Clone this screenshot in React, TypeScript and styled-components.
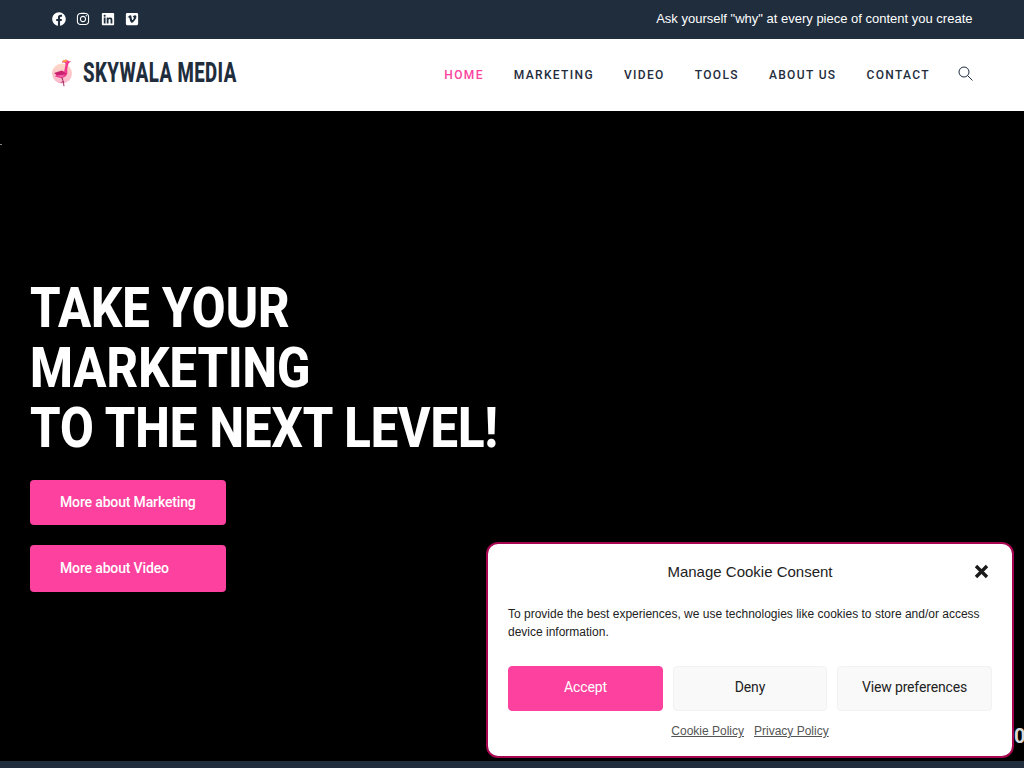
import React from 'react';
import styled, { createGlobalStyle } from 'styled-components';
import { FaFacebook, FaInstagram, FaLinkedin, FaVimeoSquare } from 'react-icons/fa';

const GlobalStyle = createGlobalStyle`
  html, body {
    margin: 0;
    padding: 0;
    height: 100%;
    overflow: hidden;
    background: #000000;
    font-family: "Liberation Sans", Arial, sans-serif;
  }
  * {
    box-sizing: border-box;
  }
`;

const Page = styled.div`
  position: relative;
  width: 1024px;
  height: 768px;
  overflow: hidden;
  display: flex;
  flex-direction: column;
`;

const TopBar = styled.div`
  height: 39px;
  flex: none;
  background: #1f2d3d;
  display: flex;
  align-items: center;
  justify-content: space-between;
  padding: 0 51.5px 2px;
`;

const SocialList = styled.div`
  display: flex;
  align-items: center;
  gap: 10.5px;
  color: #ffffff;
  font-size: 14px;
  svg {
    display: block;
    width: 14px;
    height: 14px;
  }
`;

const TopText = styled.div`
  color: #ffffff;
  font-size: 13px;
  line-height: 18px;
`;

const Header = styled.header`
  height: 72px;
  flex: none;
  background: #ffffff;
  display: flex;
  align-items: center;
  justify-content: space-between;
  padding: 0 51px;
`;

const Logo = styled.div`
  display: flex;
  align-items: center;
  gap: 10px;
`;

const FlamingoMark = styled.svg`
  display: block;
  flex: none;
  margin-top: -5px;
`;

const LogoText = styled.span`
  display: block;
  margin-top: -4px;
  font-family: "Roboto", sans-serif;
  font-weight: 800;
  font-size: 27px;
  line-height: 30px;
  letter-spacing: 0.6px;
  color: #1f2d3d;
  white-space: nowrap;
  transform: scaleX(0.69);
  transform-origin: left center;
`;

const Nav = styled.nav`
  display: flex;
  align-items: center;
  gap: 30px;
`;

const NavLink = styled.a<{ $active?: boolean }>`
  font-family: "Roboto", sans-serif;
  font-weight: 500;
  font-size: 12px;
  line-height: 16px;
  letter-spacing: 1.35px;
  margin-top: -1px;
  color: ${(p) => (p.$active ? '#fc429e' : '#1f2d3d')};
  white-space: nowrap;
`;

const SearchButton = styled.span`
  display: block;
  width: 15px;
  height: 15px;
  margin: -3px 0 0 -2px;
  color: #1f2d3d;
  svg {
    display: block;
  }
`;

const Hero = styled.section`
  position: relative;
  flex: 1;
  background: #000000;
  padding: 167px 0 0 30px;
`;

const Speck = styled.span`
  position: absolute;
  left: 0;
  top: 33px;
  width: 2px;
  height: 1px;
  background: #8a8a8a;
`;

const Counter = styled.span`
  position: absolute;
  left: 1014px;
  top: 613px;
  font-family: "Roboto", sans-serif;
  font-weight: 700;
  font-size: 20px;
  line-height: 24px;
  color: #d8d8d8;
`;

const Title = styled.h1`
  margin: 0 0 22px;
  font-family: "Roboto", sans-serif;
  font-weight: 800;
  font-size: 56px;
  line-height: 60px;
  color: #ffffff;
  white-space: nowrap;
  transform: scaleX(0.875);
  transform-origin: left center;
`;

const HeroButton = styled.a<{ $tall?: boolean }>`
  display: flex;
  align-items: center;
  width: 196px;
  height: ${(p) => (p.$tall ? '47px' : '45px')};
  margin-bottom: 20px;
  padding: 0 0 2px 30px;
  border-radius: 4px;
  background: #fc429e;
  color: #ffffff;
  font-family: "Roboto", sans-serif;
  font-weight: 500;
  font-size: 14px;
  letter-spacing: -0.15px;
`;

const BottomStrip = styled.div`
  height: 7px;
  flex: none;
  background: #1f2d3d;
`;

const Modal = styled.div`
  position: absolute;
  left: 486px;
  top: 542px;
  width: 528px;
  height: 216px;
  background: #ffffff;
  border: 2px solid #a5064f;
  border-radius: 12px;
  padding: 18px 20px 0 20px;
`;

const ModalHeader = styled.div`
  position: relative;
  display: flex;
  justify-content: center;
  align-items: center;
  height: 20px;
`;

const ModalTitle = styled.div`
  font-size: 15px;
  line-height: 20px;
  color: #222222;
`;

const CloseIcon = styled.svg`
  position: absolute;
  right: 3px;
  top: 2px;
  width: 15px;
  height: 15px;
`;

const ModalText = styled.p`
  margin: 23px 0 0;
  font-size: 12px;
  line-height: 18px;
  color: #222222;
`;

const ButtonRow = styled.div`
  display: grid;
  grid-template-columns: 155px 154px 155px;
  gap: 10px;
  margin-top: 25px;
`;

const ConsentButton = styled.button<{ $primary?: boolean }>`
  height: 45px;
  border-radius: 4px;
  border: 1px solid ${(p) => (p.$primary ? '#fc429e' : '#f2f2f2')};
  background: ${(p) => (p.$primary ? '#fc429e' : '#f9f9f9')};
  color: ${(p) => (p.$primary ? '#ffffff' : '#222222')};
  font-family: "Roboto", sans-serif;
  font-size: 14px;
  letter-spacing: -0.15px;
  padding: 0 0 3px;
`;

const Policies = styled.div`
  display: flex;
  justify-content: center;
  gap: 10px;
  margin-top: 12px;
`;

const PolicyLink = styled.a`
  font-size: 12px;
  line-height: 16px;
  color: #555555;
  text-decoration: underline;
`;

const Flamingo = () => (
  <FlamingoMark width="22" height="28" viewBox="0 0 22 28">
    <defs>
      <linearGradient id="sun" x1="0" y1="0" x2="0" y2="1">
        <stop offset="0" stopColor="#fcd9c4" />
        <stop offset="1" stopColor="#fbb6cf" />
      </linearGradient>
    </defs>
    <circle cx="11" cy="14.5" r="10" fill="url(#sun)" />
    <path d="M11 3.500C11.400 1.200 14 .2 16 1c1 .4 1.600 1 2.200 1.200l2 .3-2.400 1.600c-.5 1.800-1.300 3.600-1.500 5.600-.2 2.600.6 4.400-.6 6.400-1.200 2-3.600 3-6 2.800L4 17.500l3-3.400c1.800-1.700 4.600-2.200 6.200-1.400.2-2.800 1.400-5.400 1.300-7.700-.1-1.500-1.600-1.700-3.500-1.500z" fill="#f2388f" />
    <path d="M11 3.500C11.400 1.200 14 .2 16 1l-.6 2.400c-1.200-.5-3-.3-4.400.1z" fill="#f6a23e" />
    <path d="M3 14l8-2.400 4.500 3.400-7 3.200z" fill="#c9206f" />
    <path d="M5 16.500l9-1-3 3.500z" fill="#ef5fa4" />
    <path d="M10 18.500l1.800 3.600-2.800 1.900 3-.7.500 4h1l-.7-4.800-1.400-4z" fill="#a3255f" />
  </FlamingoMark>
);

const App: React.FC = () => (
  <Page>
    <GlobalStyle />
    <TopBar>
      <SocialList>
        <FaFacebook />
        <FaInstagram />
        <FaLinkedin />
        <FaVimeoSquare />
      </SocialList>
      <TopText>Ask yourself "why" at every piece of content you create</TopText>
    </TopBar>
    <Header>
      <Logo>
        <Flamingo />
        <LogoText>SKYWALA MEDIA</LogoText>
      </Logo>
      <Nav>
        <NavLink $active>HOME</NavLink>
        <NavLink>MARKETING</NavLink>
        <NavLink>VIDEO</NavLink>
        <NavLink>TOOLS</NavLink>
        <NavLink>ABOUT US</NavLink>
        <NavLink>CONTACT</NavLink>
        <SearchButton>
          <svg width="15" height="15" viewBox="0 0 15 15" fill="none" stroke="currentColor" strokeWidth="1">
            <circle cx="6" cy="6" r="5" />
            <path d="M9.6 9.6L14.5 14.5" />
          </svg>
        </SearchButton>
      </Nav>
    </Header>
    <Hero>
      <Speck />
      <Counter>0</Counter>
      <Title>
        TAKE YOUR
        <br />
        MARKETING
        <br />
        TO THE NEXT LEVEL!
      </Title>
      <HeroButton>More about Marketing</HeroButton>
      <HeroButton $tall>More about Video</HeroButton>
    </Hero>
    <BottomStrip />
    <Modal>
      <ModalHeader>
        <ModalTitle>Manage Cookie Consent</ModalTitle>
        <CloseIcon viewBox="0 0 15 15">
          <path d="M2 2L13 13M13 2L2 13" stroke="#1a1a1a" strokeWidth="3.4" />
        </CloseIcon>
      </ModalHeader>
      <ModalText>
        To provide the best experiences, we use technologies like cookies to store and/or access device information.
      </ModalText>
      <ButtonRow>
        <ConsentButton $primary>Accept</ConsentButton>
        <ConsentButton>Deny</ConsentButton>
        <ConsentButton>View preferences</ConsentButton>
      </ButtonRow>
      <Policies>
        <PolicyLink>Cookie Policy</PolicyLink>
        <PolicyLink>Privacy Policy</PolicyLink>
      </Policies>
    </Modal>
  </Page>
);

export default App;
